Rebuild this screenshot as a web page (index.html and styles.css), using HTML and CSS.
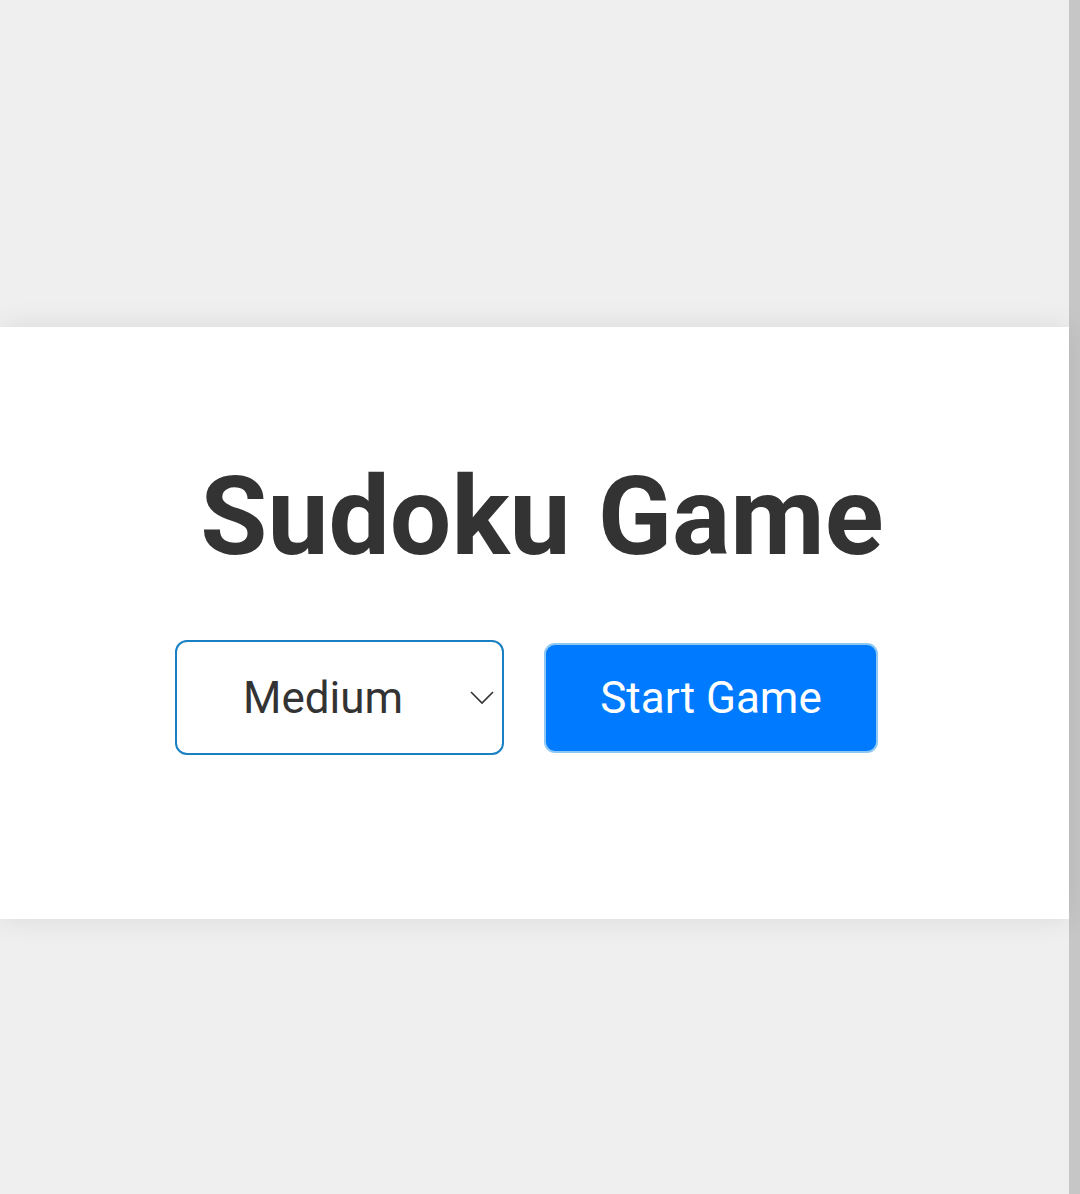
FILE: index.html
```html
<!DOCTYPE html>
<html lang="en">
<head>
<meta charset="utf-8">
<title>Sudoku Game</title>
<link rel="stylesheet" href="styles.css">
</head>
<body>
<div class="page">
  <main class="main">
    <div class="spacer-top"></div>
    <section class="card">
      <h1 class="title">Sudoku Game</h1>
      <div class="controls">
        <div class="select-wrap">
          <select class="difficulty">
            <option>Easy</option>
            <option selected>Medium</option>
            <option>Hard</option>
          </select>
          <svg class="chevron" width="24" height="14" viewBox="0 0 24 14"><path d="M1 1 L12 12 L23 1" fill="none" stroke="#333" stroke-width="1.6"/></svg>
        </div>
        <button class="start">Start Game</button>
      </div>
    </section>
    <div class="spacer-bottom"></div>
  </main>
  <div class="scrollbar"></div>
</div>
</body>
</html>
```
FILE: styles.css
```css
html, body {
  margin: 0;
  padding: 0;
  height: 100%;
  background: #efefef;
  font-family: Roboto, "Liberation Sans", sans-serif;
}
.page {
  display: flex;
  height: 1194px;
  overflow: hidden;
}
.main {
  flex: 1;
  display: flex;
  flex-direction: column;
}
.spacer-top {
  height: 327px;
  flex: none;
}
.card {
  height: 592px;
  flex: none;
  background: #fff;
  box-shadow: 0 0 28px rgba(0,0,0,0.09);
  display: flex;
  flex-direction: column;
  align-items: center;
  box-sizing: border-box;
  padding-top: 128px;
  position: relative;
  z-index: 1;
}
.title {
  margin: 0;
  font-size: 109px;
  font-weight: 700;
  color: #333;
  line-height: 124px;
  padding-left: 15px;
}
.controls {
  display: flex;
  align-items: center;
  gap: 40px;
  margin-top: 61px;
  padding-right: 16px;
}
.select-wrap {
  position: relative;
}
.difficulty {
  appearance: none;
  -webkit-appearance: none;
  width: 329px;
  height: 115px;
  border: 2px solid #1a80c4;
  border-radius: 12px;
  background: #fff;
  color: #333;
  font-family: Roboto, "Liberation Sans", sans-serif;
  font-size: 44px;
  padding: 0 0 0 66px;
  outline: none;
}
.chevron {
  position: absolute;
  right: 10px;
  top: 51px;
  pointer-events: none;
}
.start {
  width: 334px;
  height: 110px;
  background: #007bff;
  color: #fff;
  border: 2px solid #8ec8f2;
  border-radius: 11px;
  font-family: Roboto, "Liberation Sans", sans-serif;
  font-size: 44px;
}
.scrollbar {
  width: 11px;
  flex: none;
  background: #c6c6c6;
}
.spacer-bottom {
  flex: 1;
}
```
